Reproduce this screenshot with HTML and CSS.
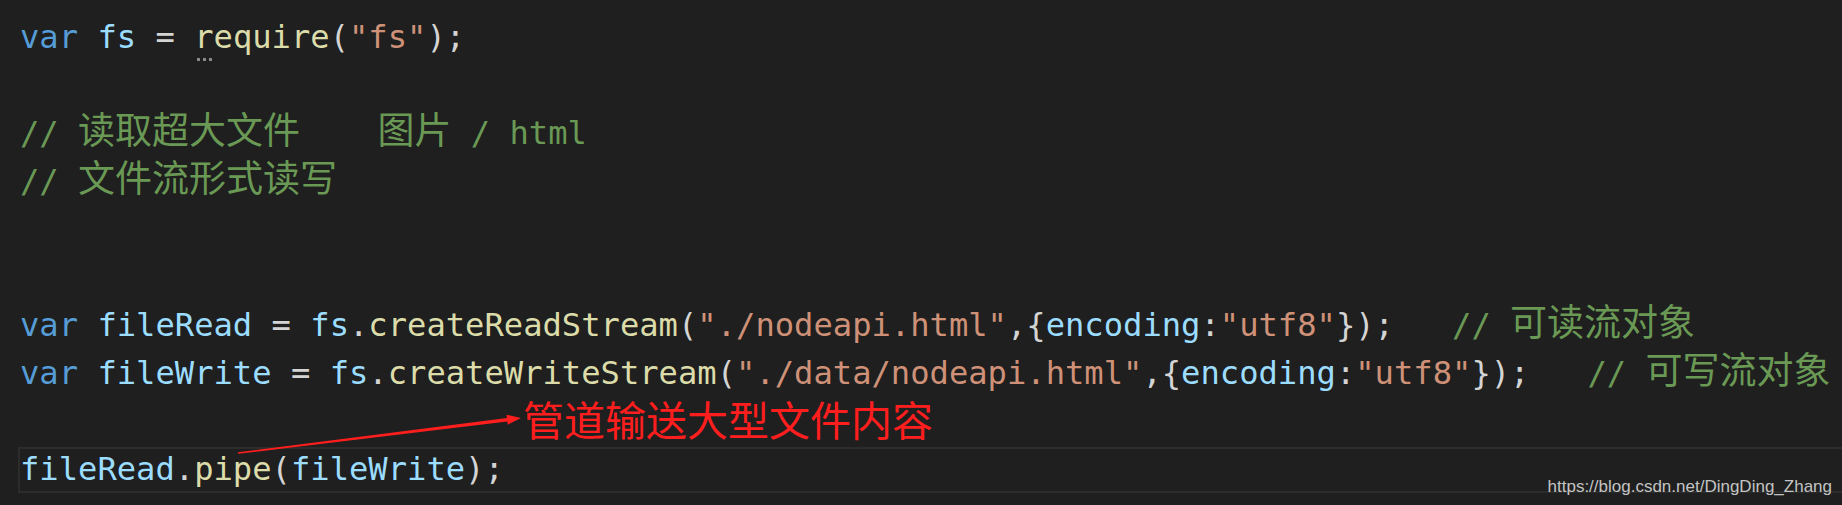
FILE: index.html
```html
<!DOCTYPE html>
<html lang="zh-CN">
<head>
<meta charset="utf-8">
<title>fs stream</title>
<link rel="stylesheet" href="styles.css">
</head>
<body>
<div class="screen">
  <div class="editor">
    <div class="line"><span class="kw">var</span> <span class="vr">fs</span> = <span class="fn hint">require</span>(<span class="str">"fs"</span>);</div>
    <div class="line"></div>
    <div class="line cm">// <span class="cjk">读取超大文件</span>    <span class="cjk">图片</span> / html</div>
    <div class="line cm">// <span class="cjk">文件流形式读写</span></div>
    <div class="line"></div>
    <div class="line"></div>
    <div class="line"><span class="kw">var</span> <span class="vr">fileRead</span> = <span class="vr">fs</span>.<span class="fn">createReadStream</span>(<span class="str">"./nodeapi.html"</span>,{<span class="vr">encoding</span>:<span class="str">"utf8"</span>});   <span class="cm">// <span class="cjk">可读流对象</span></span></div>
    <div class="line"><span class="kw">var</span> <span class="vr">fileWrite</span> = <span class="vr">fs</span>.<span class="fn">createWriteStream</span>(<span class="str">"./data/nodeapi.html"</span>,{<span class="vr">encoding</span>:<span class="str">"utf8"</span>});   <span class="cm">// <span class="cjk">可写流对象</span></span></div>
    <div class="line"></div>
    <div class="line current"><span class="vr">fileRead</span>.<span class="fn">pipe</span>(<span class="vr">fileWrite</span>);</div>
  </div>

  <svg class="arrow" width="1842" height="505" viewBox="0 0 1842 505" aria-hidden="true">
    <polygon points="237.9,452.2 506.9,417.9 506.5,414.7 521,418 507.7,424.7 507.3,421.5 238.1,453.8" fill="#ff1e1e"/>
  </svg>
  <div class="note">管道输送大型文件内容</div>
  <div class="watermark">https://blog.csdn.net/DingDing_Zhang</div>
</div>
</body>
</html>
```

FILE: styles.css
```css
html, body {
  margin: 0;
  padding: 0;
  background: #1e1f1e;
}

.screen {
  position: relative;
  width: 1842px;
  height: 505px;
  overflow: hidden;
  background: #1e1f1e;
}

.editor {
  padding-top: 13px;
  font-family: "DejaVu Sans Mono", "Liberation Mono", monospace;
  font-size: 32.15px;
  color: #d4d4d4;
}

.line {
  height: 48px;
  line-height: 48px;
  padding-left: 20px;
  white-space: pre;
  box-sizing: border-box;
}

.line.current {
  height: 46px;
  margin-top: 2px;
  line-height: 40px;
  margin-left: 18px;
  padding-left: 0;
  border: 2px solid #2b2c2b;
  border-right: none;
}

.kw { color: #569cd6; }
.vr { color: #9cdcfe; }
.fn { color: #dcdcaa; }
.str { color: #ce9178; }
.cm { color: #6a9955; }

.cjk {
  font-family: "Noto Sans CJK SC", "Noto Sans", sans-serif;
  font-size: 37px;
  line-height: 1;
}

.hint {
  position: relative;
}

.hint::after {
  content: "";
  position: absolute;
  left: 3px;
  top: 40px;
  width: 3px;
  height: 3px;
  background: #8a8a8a;
  box-shadow: 6px 0 0 #8a8a8a, 12px 0 0 #8a8a8a;
}

.arrow {
  position: absolute;
  left: 0;
  top: 0;
}

.note {
  position: absolute;
  left: 523px;
  top: 398px;
  font-family: "Noto Sans CJK SC", sans-serif;
  font-size: 41px;
  line-height: 41px;
  color: #ff1e1e;
  white-space: nowrap;
}

.watermark {
  position: absolute;
  right: 10px;
  top: 478px;
  font-family: "Liberation Sans", Arial, sans-serif;
  font-size: 17px;
  line-height: 17px;
  color: #c4c4c4;
  white-space: nowrap;
}
```
